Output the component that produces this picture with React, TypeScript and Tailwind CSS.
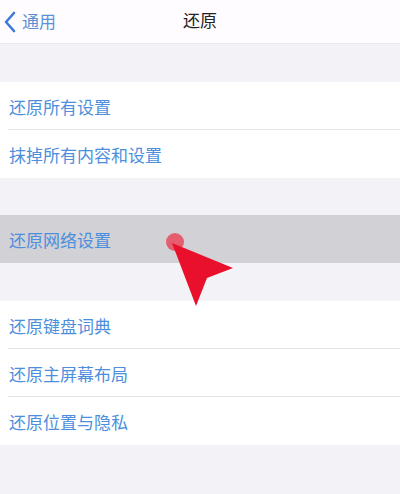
const font = { fontFamily: '"Noto Sans CJK SC", "Noto Sans", sans-serif' }

const group1 = ['还原所有设置', '抹掉所有内容和设置']
const group2 = ['还原键盘词典', '还原主屏幕布局', '还原位置与隐私']

function Row({ label, last }: { label: string; last?: boolean }) {
  return (
    <div className="pl-[9px] h-[48px] relative flex items-center">
      <span className="text-[17px] text-[#4d8fdc] leading-none">{label}</span>
      {!last && <div className="absolute left-[8px] right-0 bottom-0 h-px bg-[#e4e3e8]" />}
    </div>
  )
}

export default function App() {
  return (
    <div className="w-[400px] h-[494px] bg-[#f3f2f7] overflow-hidden relative" style={font}>
      {/* nav bar */}
      <div className="h-[44px] bg-[#fefcfe] border-b border-[#e9e8ee] flex items-center relative">
        <div className="flex items-center pl-[3px]">
          <svg width="14" height="22" viewBox="0 0 14 22">
            <path d="M11 2 L3 11 L11 20" fill="none" stroke="#3a7bd5" strokeWidth="2.6" strokeLinecap="round" strokeLinejoin="round" />
          </svg>
          <span className="ml-[5px] text-[17px] text-[#5b8fd6] leading-none mt-[-2px]">通用</span>
        </div>
        <span className="absolute left-0 right-0 text-center text-[17px] text-[#222] leading-none top-[11px]">还原</span>
      </div>

      <div className="h-[38px]" />

      <div className="bg-white">
        {group1.map((l, i) => (
          <Row key={l} label={l} last={i === group1.length - 1} />
        ))}
      </div>

      <div className="h-[37px]" />

      <div className="bg-[#d2d1d6] h-[48px] pl-[9px] flex items-center">
        <span className="text-[17px] text-[#4d8fdc] leading-none">还原网络设置</span>
      </div>

      <div className="h-[38px]" />

      <div className="bg-white">
        {group2.map((l, i) => (
          <Row key={l} label={l} last={i === group2.length - 1} />
        ))}
      </div>

      {/* red pointer overlay */}
      <svg className="absolute left-0 top-0 pointer-events-none" width="400" height="494">
        <circle cx="175" cy="242" r="9" fill="#e84a5a" opacity="0.85" />
        <polygon points="172,243 233,268 207,278 196,306" fill="#e8102a" />
      </svg>
    </div>
  )
}
